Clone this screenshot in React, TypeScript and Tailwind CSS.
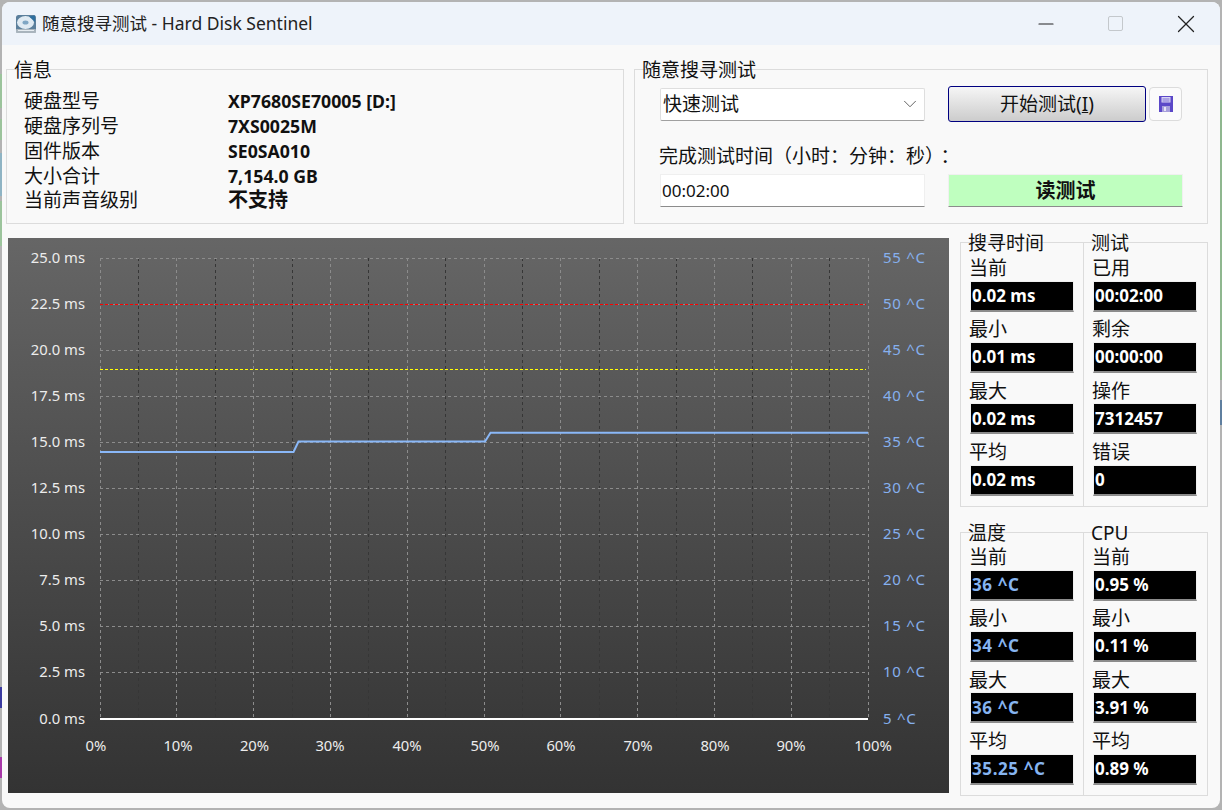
import { ChevronDown, Minus, X } from 'lucide-react';

const FONT = 'font-["Noto_Sans","Noto_Sans_CJK_SC",sans-serif]';

const infoRows = [
  ['硬盘型号', 'XP7680SE70005 [D:]'],
  ['硬盘序列号', '7XS0025M'],
  ['固件版本', 'SE0SA010'],
];

const yLeft = ['25.0 ms', '22.5 ms', '20.0 ms', '17.5 ms', '15.0 ms', '12.5 ms', '10.0 ms', '7.5 ms', '5.0 ms', '2.5 ms', '0.0 ms'];
const yRight = ['55 ^C', '50 ^C', '45 ^C', '40 ^C', '35 ^C', '30 ^C', '25 ^C', '20 ^C', '15 ^C', '10 ^C', '5 ^C'];
const xLabels: [string, number][] = [
  ['0%', 96], ['10%', 178], ['20%', 254.5], ['30%', 330], ['40%', 407], ['50%', 485],
  ['60%', 561], ['70%', 638], ['80%', 715], ['90%', 791], ['100%', 873],
];

const seekRows = [['当前', '0.02 ms'], ['最小', '0.01 ms'], ['最大', '0.02 ms'], ['平均', '0.02 ms']];
const testRows = [['已用', '00:02:00'], ['剩余', '00:00:00'], ['操作', '7312457'], ['错误', '0']];
const tempRows = [['当前', '36 ^C'], ['最小', '34 ^C'], ['最大', '36 ^C'], ['平均', '35.25 ^C']];
const cpuRows = [['当前', '0.95 %'], ['最小', '0.11 %'], ['最大', '3.91 %'], ['平均', '0.89 %']];

function DiskIcon() {
  return (
    <svg width="22" height="22" viewBox="0 0 22 22" className="shrink-0">
      <rect x="1" y="2" width="20" height="18" rx="2.5" fill="#5b7f9c" />
      <rect x="1" y="16" width="20" height="4" rx="1" fill="#a9b4bd" />
      <ellipse cx="10.5" cy="9.5" rx="8.5" ry="6.5" fill="#dfeaf3" />
      <ellipse cx="10.5" cy="9.5" rx="3" ry="2" fill="#7fa6c4" />
      <path d="M14 3.5 L20 2.5 L20 9 Z" fill="#2f6f9f" />
      <rect x="3" y="17" width="16" height="1" fill="#e6ecf1" />
    </svg>
  );
}

function FloppyIcon() {
  return (
    <svg width="14" height="16" viewBox="0 0 14 16">
      <path d="M0 0 H14 V16 H0 Z" fill="#5b48c8" />
      <rect x="2.5" y="1" width="9" height="5.5" fill="#d9d4f3" />
      <rect x="3.5" y="2.5" width="7" height="1" fill="#7d6fd6" />
      <rect x="3.5" y="4.5" width="7" height="1" fill="#7d6fd6" />
      <rect x="3" y="10" width="8" height="6" fill="#a79fdc" />
      <rect x="5" y="11" width="2" height="4" fill="#e6e3f5" />
    </svg>
  );
}

function GroupLabel({ text, className }: { text: string; className: string }) {
  return <span className={`absolute text-[19px] leading-[22px] text-[#111] ${className}`}>{text}</span>;
}

function StatBox({ label, value, tone }: { label: string; value: string; tone?: string }) {
  return (
    <div className="flex h-[61.4px] flex-col">
      <div className="-ml-[1px] h-[24px] text-[19px] leading-[24px] text-[#111]">{label}</div>
      <div className="mt-[0.5px] flex h-[31px] w-[104px] items-center border border-b-2 border-[#f0f0f0] border-b-[#8c8c8c] bg-black pl-[1px]">
        <span className={`text-[17px] font-bold leading-none ${tone ?? 'text-white'}`}>{value}</span>
      </div>
    </div>
  );
}

function StatGroup({ leftTitle, rightTitle, left, right, leftTone, height, top }: {
  leftTitle: string;
  rightTitle: string;
  left: string[][];
  right: string[][];
  leftTone?: string;
  height: string;
  top: string;
}) {
  return (
    <div className={`relative flex w-[248px] border border-[#dcdcdc] ${height}`}>
      <GroupLabel text={leftTitle} className="left-[7px] -top-[11px]" />
      <GroupLabel text={rightTitle} className="left-[130px] -top-[11px]" />
      <div className={`w-[123px] border-r border-[#dcdcdc] pl-[9px] ${top}`}>
        {left.map(([l, v]) => <StatBox key={l} label={l} value={v} tone={leftTone} />)}
      </div>
      <div className={`pl-[9px] ${top}`}>
        {right.map(([l, v]) => <StatBox key={l} label={l} value={v} />)}
      </div>
    </div>
  );
}

function Chart() {
  // coordinates are page pixels, the chart box starts at 8,238
  const hLines = yLeft.map((_, i) => 258 + i * 46.05);
  const vLight = Array.from({ length: 11 }, (_, i) => 100 + i * 76.8);
  const vDark = Array.from({ length: 10 }, (_, i) => 138.4 + i * 76.8);
  return (
    <div className="h-[555px] w-[941px] shrink-0 bg-gradient-to-b from-[#666666] to-[#333333]">
      <svg width="941" height="555" viewBox="8 238 941 555" className={FONT} shapeRendering="crispEdges">
        {vDark.map((x) => (
          <line key={x} x1={x} x2={x} y1={258} y2={718} stroke="#363636" strokeDasharray="3 3" />
        ))}
        {vLight.map((x) => (
          <line key={x} x1={x} x2={x} y1={258} y2={718} stroke="#8c8c8c" strokeDasharray="3 3" />
        ))}
        {hLines.map((y) => (
          <line key={y} x1={100} x2={868} y1={y} y2={y} stroke="#8c8c8c" strokeDasharray="3 3" />
        ))}
        <line x1={100} x2={866} y1={304.5} y2={304.5} stroke="#ff0000" strokeDasharray="3 2" />
        <line x1={100} x2={866} y1={369.5} y2={369.5} stroke="#ffff00" strokeDasharray="3 2" />
        <polyline
          points="100,452 293.5,452 298.5,441.5 485,441.5 490.5,432.7 868,432.7"
          fill="none"
          stroke="#8ab8f8"
          strokeWidth="2"
          shapeRendering="auto"
        />
        <rect x="100" y="718" width="768" height="2" fill="#ffffff" />
        {yLeft.map((t, i) => (
          <text key={t} x={85} y={hLines[i] + 5} textAnchor="end" fontSize="14.8" fill="#ececec">{t}</text>
        ))}
        {yRight.map((t, i) => (
          <text key={t} x={883} y={hLines[i] + 5} fontSize="15" letterSpacing="0.7" fill="#86b0ee">{t}</text>
        ))}
        {xLabels.map(([t, x]) => (
          <text key={t} x={x} y={751} textAnchor="middle" fontSize="14.8" fill="#ececec">{t}</text>
        ))}
      </svg>
    </div>
  );
}

export default function App() {
  return (
    <div className={`relative h-[810px] w-[1222px] overflow-hidden bg-[#b3b3b3] p-[2px] ${FONT}`}>
      {/* bits of the desktop behind the window */}
      <div className="absolute left-0 top-[74px] h-[34px] w-[2px] bg-[#9cc49c]" />
      <div className="absolute left-0 top-[119px] h-[21px] w-[2px] bg-[#9cc49c]" />
      <div className="absolute left-0 top-[153px] h-[43px] w-[2px] bg-[#8fb4c4]" />
      <div className="absolute left-0 top-[201px] h-[45px] w-[2px] bg-[#9cc49c]" />
      <div className="absolute left-0 top-[687px] h-[21px] w-[2px] bg-[#3a3aa0]" />
      <div className="absolute left-0 top-[757px] h-[21px] w-[2px] bg-[#a838a8]" />
      <div className="absolute right-0 top-[100px] h-[280px] w-[2px] bg-[#8fb78f]" />
      <div className="absolute right-0 top-[400px] h-[25px] w-[2px] bg-[#5f7f9f]" />

      <div className="flex h-[806px] w-[1218px] flex-col overflow-hidden rounded-[8px] bg-[#f9f9f9]">
        <div className="flex h-[43px] shrink-0 items-center bg-[#eef3fa] pl-[13px]">
          <DiskIcon />
          <span className="ml-[5px] text-[17.5px] text-[#222]">随意搜寻测试 - Hard Disk Sentinel</span>
          <div className="ml-auto flex items-center text-[#222]">
            <Minus size={24} strokeWidth={1.2} className="mr-[50px]" />
            <div className="mr-[48px] h-[15px] w-[15px] rounded-[2px] border border-[#c4c8cc]" />
            <X size={30} strokeWidth={1} className="mr-[19px]" />
          </div>
        </div>

        <div className="mt-[24px] flex gap-[10px] pl-[4px]">
          <div className="relative h-[155px] w-[618px] border border-[#dcdcdc] pl-[17px] pt-[19px]">
            <GroupLabel text="信息" className="left-[7px] -top-[11px]" />
            <div className="grid grid-cols-[204px_1fr] text-[#111]">
              {infoRows.map(([l, v]) => (
                <div key={l} className="contents">
                  <div className="h-[25px] text-[19px] leading-[25px]">{l}</div>
                  <div className="h-[25px] text-[17.7px] font-bold leading-[25px]">{v}</div>
                </div>
              ))}
              <div className="h-[24px] text-[19px] leading-[24px]">大小合计</div>
              <div className="h-[24px] text-[17.7px] font-bold leading-[24px]">7,154.0 GB</div>
              <div className="h-[24px] text-[19px] leading-[24px]">当前声音级别</div>
              <div className="h-[24px] text-[20px] font-bold leading-[24px]">不支持</div>
            </div>
          </div>

          <div className="relative h-[155px] w-[574px] border border-[#dcdcdc] pl-[25px] pt-[16px]">
            <GroupLabel text="随意搜寻测试" className="left-[7px] -top-[11px]" />
            <div className="flex items-center">
              <div className="flex h-[33px] w-[265px] items-center justify-between rounded-[2px] border border-[#dedede] border-b-[#a0a0a0] bg-white pl-[2px] pr-[3px] text-[19px] text-[#111]">
                快速测试
                <ChevronDown size={22} strokeWidth={1} className="text-[#555]" />
              </div>
              <button className="ml-[23px] h-[36px] w-[198px] rounded-[3px] border border-[#000080] bg-gradient-to-b from-[#f6f6f6] to-[#cccccc] text-[19px] text-[#111]">
                开始测试(<span className="underline">I</span>)
              </button>
              <div className="ml-[3px] flex h-[34px] w-[33px] items-center justify-center rounded-[4px] border border-[#dcdcdc] bg-[#fbfbfb]">
                <FloppyIcon />
              </div>
            </div>
            <div className="mt-[21px] -ml-[1px] h-[27px] text-[19px] leading-[27px] text-[#111]">
              完成测试时间（小时：分钟：秒）<span className="ml-[6px]">：</span>
            </div>
            <div className="mt-[4px] flex">
              <div className="flex h-[33px] w-[265px] items-center border border-[#efefef] border-b-[#8c8c8c] bg-white pl-[1px] text-[17px] text-[#111]">
                00:02:00
              </div>
              <div className="ml-[23px] flex h-[33px] w-[235px] items-center justify-center border border-[#f0f0f0] border-b-[#8c8c8c] bg-[#bfffbf] text-[20px] font-bold text-[#111]">
                读测试
              </div>
            </div>
          </div>
        </div>

        <div className="mt-[14px] flex pl-[6px]">
          <Chart />
          <div className="ml-[11px] flex flex-col gap-[25px] pt-[4px]">
            <StatGroup leftTitle="搜寻时间" rightTitle="测试" left={seekRows} right={testRows} height="h-[265px]" top="pt-[13px]" />
            <StatGroup leftTitle="温度" rightTitle="CPU" left={tempRows} right={cpuRows} leftTone="text-[#86b4f0] tracking-[0.6px]" height="h-[264px]" top="pt-[12px]" />
          </div>
        </div>
      </div>
    </div>
  );
}
